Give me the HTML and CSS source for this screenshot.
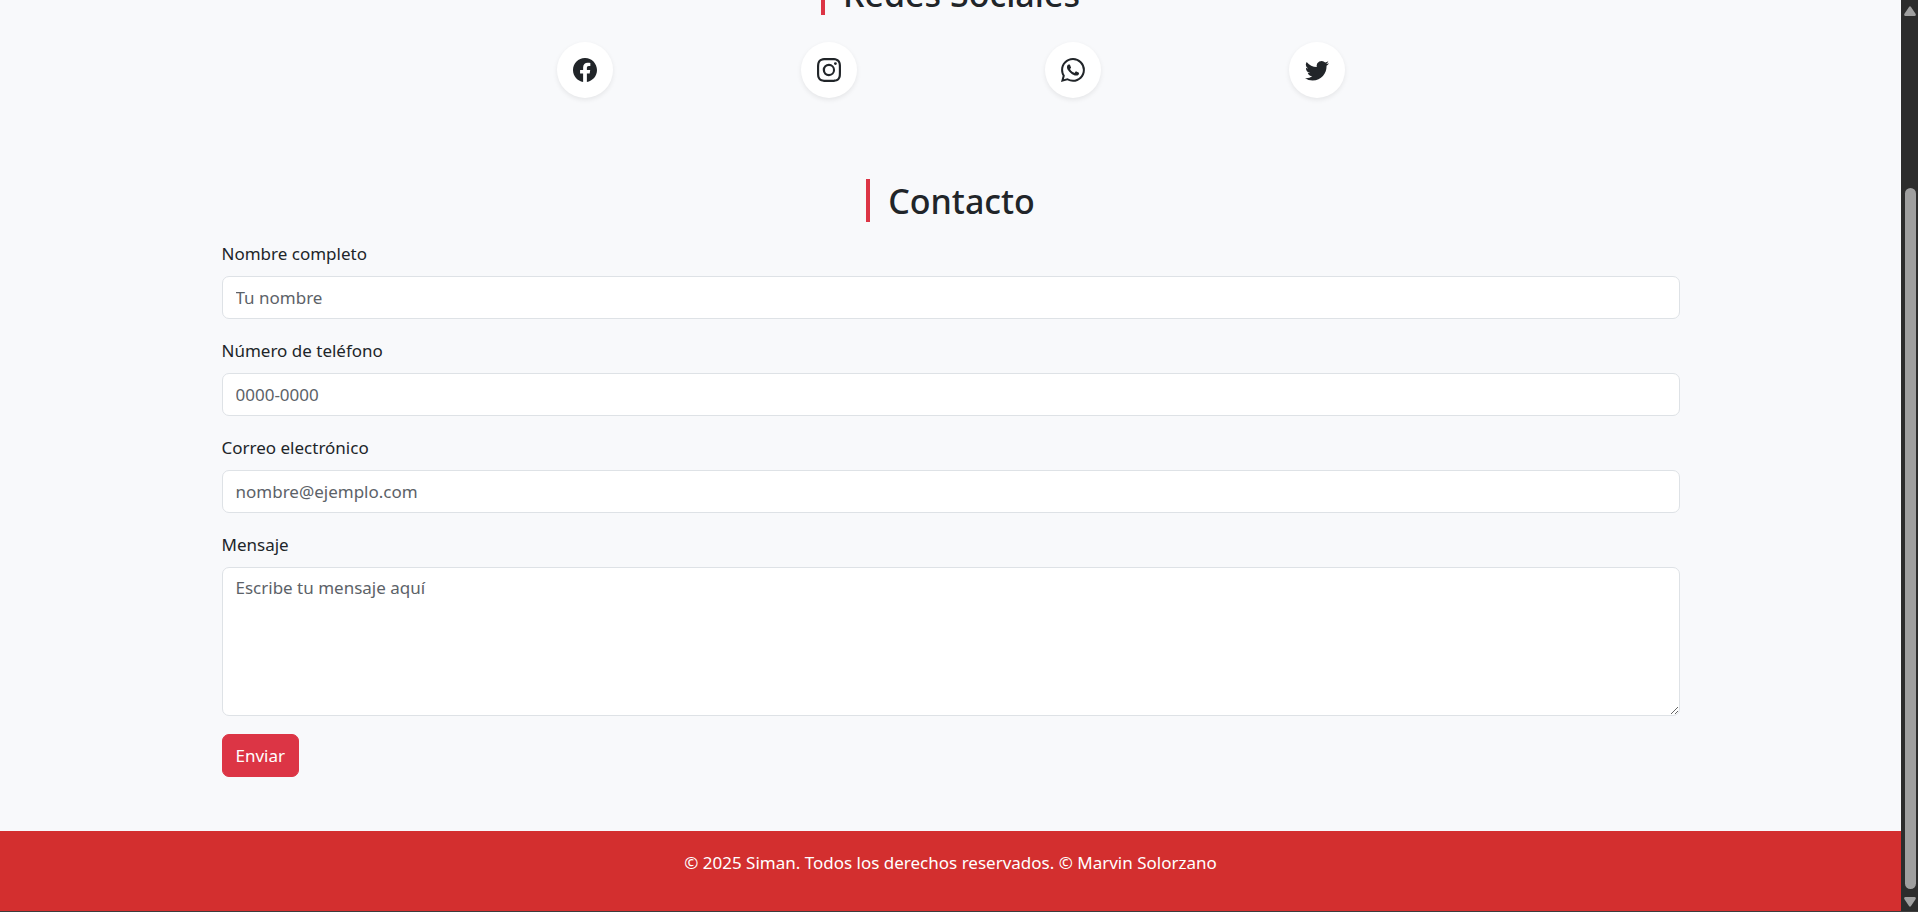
FILE: index.html
```html
<!DOCTYPE html>
<html lang="es">
<head>
  <meta charset="utf-8">
  <meta name="viewport" content="width=device-width, initial-scale=1">
  <title>Siman</title>
  <link rel="stylesheet" href="styles.css">
</head>
<body>
  <div class="shell">
    <div class="page">
      <section class="social">
        <h2 class="title">Redes Sociales</h2>
        <nav class="social-list" aria-label="Redes sociales">
          <a class="social-link" href="#facebook" aria-label="Facebook">
            <svg class="icon" viewBox="0 0 16 16"><path d="M16 8.049c0-4.446-3.582-8.05-8-8.05C3.58 0-.002 3.603-.002 8.05c0 4.017 2.926 7.347 6.75 7.951v-5.625h-2.03V8.05H6.75V6.275c0-2.017 1.195-3.131 3.022-3.131.876 0 1.791.157 1.791.157v1.98h-1.009c-.993 0-1.303.621-1.303 1.258v1.51h2.218l-.354 2.326H9.25V16c3.824-.604 6.75-3.934 6.75-7.951"/></svg>
          </a>
          <a class="social-link" href="#instagram" aria-label="Instagram">
            <svg class="icon" viewBox="0 0 16 16"><path d="M8 0C5.829 0 5.556.01 4.703.048 3.85.088 3.269.222 2.76.42a3.9 3.9 0 0 0-1.417.923A3.9 3.9 0 0 0 .42 2.76C.222 3.268.087 3.85.048 4.7.01 5.555 0 5.827 0 8.001c0 2.172.01 2.444.048 3.297.04.852.174 1.433.372 1.942.205.526.478.972.923 1.417.444.445.89.719 1.416.923.51.198 1.09.333 1.942.372C5.555 15.99 5.827 16 8 16s2.444-.01 3.298-.048c.851-.04 1.434-.174 1.943-.372a3.9 3.9 0 0 0 1.416-.923c.445-.445.718-.891.923-1.417.197-.509.332-1.09.372-1.942C15.99 10.445 16 10.173 16 8s-.01-2.445-.048-3.299c-.04-.851-.175-1.433-.372-1.941a3.9 3.9 0 0 0-.923-1.417A3.9 3.9 0 0 0 13.24.42c-.51-.198-1.092-.333-1.943-.372C10.443.01 10.172 0 7.998 0zm-.717 1.442h.718c2.136 0 2.389.007 3.232.046.78.035 1.204.166 1.486.275.373.145.64.319.92.599s.453.546.598.92c.11.281.24.705.275 1.485.039.843.047 1.096.047 3.231s-.008 2.389-.047 3.232c-.035.78-.166 1.203-.275 1.485a2.5 2.5 0 0 1-.599.919c-.28.28-.546.453-.92.598-.28.11-.704.24-1.485.276-.843.038-1.096.047-3.232.047s-2.39-.009-3.233-.047c-.78-.036-1.203-.166-1.485-.276a2.5 2.5 0 0 1-.92-.598 2.5 2.5 0 0 1-.6-.92c-.109-.281-.24-.705-.275-1.485-.038-.843-.046-1.096-.046-3.233s.008-2.388.046-3.231c.036-.78.166-1.204.276-1.486.145-.373.319-.64.599-.92s.546-.453.92-.598c.282-.11.705-.24 1.485-.276.738-.034 1.024-.044 2.515-.045zm4.988 1.328a.96.96 0 1 0 0 1.92.96.96 0 0 0 0-1.92m-4.27 1.122a4.109 4.109 0 1 0 0 8.217 4.109 4.109 0 0 0 0-8.217m0 1.441a2.667 2.667 0 1 1 0 5.334 2.667 2.667 0 0 1 0-5.334"/></svg>
          </a>
          <a class="social-link" href="#whatsapp" aria-label="WhatsApp">
            <svg class="icon" viewBox="0 0 16 16"><path d="M13.601 2.326A7.85 7.85 0 0 0 7.994 0C3.627 0 .068 3.558.064 7.926c0 1.399.366 2.76 1.057 3.965L0 16l4.204-1.102a7.9 7.9 0 0 0 3.79.965h.004c4.368 0 7.926-3.558 7.93-7.93A7.9 7.9 0 0 0 13.6 2.326zM7.994 14.521a6.6 6.6 0 0 1-3.356-.92l-.24-.144-2.494.654.666-2.433-.156-.251a6.56 6.56 0 0 1-1.007-3.505c0-3.626 2.957-6.584 6.591-6.584a6.56 6.56 0 0 1 4.66 1.931 6.56 6.56 0 0 1 1.928 4.66c-.004 3.639-2.961 6.592-6.592 6.592m3.615-4.934c-.197-.099-1.17-.578-1.353-.646-.182-.065-.315-.099-.445.099-.133.197-.513.646-.627.775-.114.133-.232.148-.43.05-.197-.1-.836-.308-1.592-.985-.59-.525-.985-1.175-1.103-1.372-.114-.198-.011-.304.088-.403.087-.088.197-.232.296-.346.1-.114.133-.198.198-.33.065-.134.034-.248-.015-.347-.05-.099-.445-1.076-.612-1.47-.16-.389-.323-.335-.445-.34-.114-.007-.247-.007-.38-.007a.73.73 0 0 0-.529.247c-.182.198-.691.677-.691 1.654s.71 1.916.81 2.049c.098.133 1.394 2.132 3.383 2.992.47.205.84.326 1.129.418.475.152.904.129 1.246.08.38-.058 1.171-.48 1.338-.943.164-.464.164-.86.114-.943-.049-.084-.182-.133-.38-.232"/></svg>
          </a>
          <a class="social-link" href="#twitter" aria-label="Twitter">
            <svg class="icon" viewBox="0 0 16 16"><path d="M5.026 15c6.038 0 9.341-5.003 9.341-9.334q.002-.211-.006-.422A6.7 6.7 0 0 0 16 3.542a6.7 6.7 0 0 1-1.889.518 3.3 3.3 0 0 0 1.447-1.817 6.5 6.5 0 0 1-2.087.793A3.286 3.286 0 0 0 7.875 6.03a9.32 9.32 0 0 1-6.767-3.429 3.29 3.29 0 0 0 1.018 4.382A3.3 3.3 0 0 1 .64 6.575v.045a3.29 3.29 0 0 0 2.632 3.218 3.2 3.2 0 0 1-.865.115 3 3 0 0 1-.614-.057 3.28 3.28 0 0 0 3.067 2.277A6.6 6.6 0 0 1 .78 13.58a6 6 0 0 1-.78-.045A9.34 9.34 0 0 0 5.026 15"/></svg>
          </a>
        </nav>
      </section>

      <section class="contact">
        <h2 class="title">Contacto</h2>
        <form class="form">
          <div class="field">
            <label class="label" for="nombre">Nombre completo</label>
            <input class="control" id="nombre" type="text" placeholder="Tu nombre">
          </div>
          <div class="field">
            <label class="label" for="telefono">Número de teléfono</label>
            <input class="control" id="telefono" type="tel" placeholder="0000-0000">
          </div>
          <div class="field">
            <label class="label" for="correo">Correo electrónico</label>
            <input class="control" id="correo" type="email" placeholder="nombre@ejemplo.com">
          </div>
          <div class="field">
            <label class="label" for="mensaje">Mensaje</label>
            <textarea class="control control-area" id="mensaje" rows="5" placeholder="Escribe tu mensaje aquí"></textarea>
          </div>
          <button class="button" type="submit">Enviar</button>
        </form>
      </section>

      <footer class="footer">
        <p class="footer-text">© 2025 Siman. Todos los derechos reservados. © Marvin Solorzano</p>
      </footer>
    </div>

    <div class="scrollbar" aria-hidden="true">
      <svg class="arrow" viewBox="0 0 12 10"><path d="M5 1Q6 -.5 7 1L11.700 8Q12.200 10 10.500 10H1.500Q-.2 10 .3 8Z"/></svg>
      <div class="track"><div class="thumb"></div></div>
      <svg class="arrow" viewBox="0 0 12 10"><path d="M5 9Q6 10.500 7 9L11.700 2Q12.200 0 10.500 0H1.500Q-.2 0 .3 2Z"/></svg>
    </div>
  </div>
</body>
</html>
```
FILE: styles.css
```css
* {
  box-sizing: border-box;
}

body {
  margin: 0;
  background: #f8f9fb;
  color: #212529;
  font: 400 17px/27px "Segoe UI", "Noto Sans", sans-serif;
}

.shell {
  display: flex;
  height: 100vh;
  overflow: hidden;
  border-bottom: 1px solid #3c3c3c;
}

/* The view rests at the end of the page */
.page {
  flex: 1;
  min-width: 0;
  display: flex;
  flex-direction: column;
  justify-content: flex-end;
}

.title {
  width: fit-content;
  margin: 0 auto;
  padding: 2px 0 0 18px;
  border-left: 4px solid #dc3545;
  font-size: 34px;
  font-weight: 500;
  line-height: 41px;
}

.social-list {
  display: grid;
  grid-template-columns: repeat(4, 1fr);
  justify-items: center;
  max-width: 976px;
  margin: 27px auto 0;
}

.social-link {
  display: flex;
  align-items: center;
  justify-content: center;
  width: 56px;
  height: 56px;
  border-radius: 50%;
  background: #fff;
  box-shadow: 0 2px 5px rgba(0, 0, 0, 0.08);
  color: #212529;
}

.icon {
  width: 24px;
  height: 24px;
  fill: currentColor;
}

.contact {
  width: 100%;
  max-width: 1486px;
  margin: 0 auto;
  padding: 81px 14px 54px;
}

.form {
  margin-top: 18px;
}

.field {
  margin-bottom: 18px;
}

.label {
  display: block;
  margin-bottom: 9px;
}

.control {
  display: block;
  width: 100%;
  height: 43px;
  padding: 7px 13px;
  border: 1px solid #dee2e6;
  border-radius: 7px;
  background: #fff;
  color: #212529;
  font: inherit;
}

.control::placeholder {
  color: #5c6268;
  opacity: 1;
}

.control-area {
  height: auto;
  min-height: 149px;
  padding: 6px 13px;
  resize: vertical;
}

.button {
  display: block;
  padding: 7px 13px;
  border: 1px solid #dc3545;
  border-radius: 7px;
  background: #dc3545;
  color: #fff;
  font: inherit;
}

.footer {
  padding: 18px 0 17px;
  background: #d32f2f;
  color: #fff;
  text-align: center;
}

.footer-text {
  margin: 0 0 18px;
}

.scrollbar {
  display: flex;
  flex-direction: column;
  align-items: center;
  flex: 0 0 17px;
  padding: 6px 1px 4px 2px;
  background: #2c2c2c;
}

.arrow {
  width: 12px;
  height: 10px;
  fill: #9f9f9f;
}

.track {
  display: flex;
  flex: 1;
  flex-direction: column;
  justify-content: flex-end;
  margin: 8px 0;
}

.thumb {
  width: 11px;
  height: 81%;
  border-radius: 6px;
  background: #9f9f9f;
}
```
